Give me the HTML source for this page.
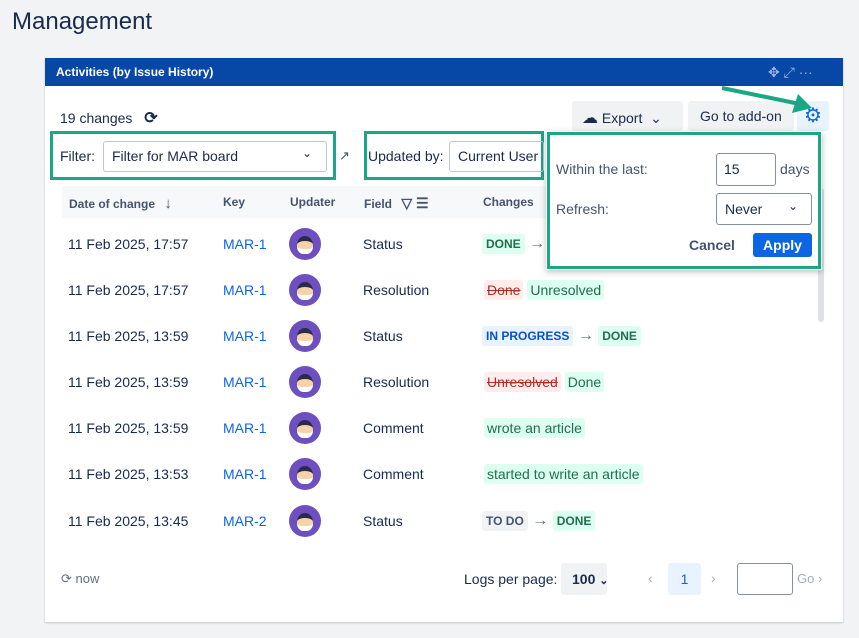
<!DOCTYPE html><html><head><meta charset="utf-8"><style>
*{margin:0;padding:0;box-sizing:border-box}
body{width:859px;height:638px;background:#f2f3f5;font-family:"Liberation Sans",sans-serif;position:relative;overflow:hidden;color:#172b4d}
.a{position:absolute}
.t{font-size:14px;color:#172b4d}
.lnk{color:#0c66e4;font-size:14px}
.lz{display:inline-block;padding:3px 4px;border-radius:3px;font-size:12px;font-weight:bold}
.av{width:32px;height:32px;border-radius:50%;background:#6e4fbf;overflow:hidden}
.btn{background:#f1f2f4;border-radius:3px}
.box{border:3px solid #1aa784}
.ch{font-size:14px}
.ch span{padding:2px 3px;border-radius:3px}
</style></head><body>
<div class="a" style="left:12px;top:8px;font-size:24px;color:#172b4d">Management</div>
<div class="a" style="left:45px;top:58px;width:798px;height:564px;background:#fff;box-shadow:0 1px 2px rgba(0,0,0,.2)"></div>
<div class="a" style="left:45px;top:58px;width:798px;height:28px;background:#0747a6"></div>
<div class="a" style="left:56px;top:65px;font-size:12px;font-weight:bold;color:#fff">Activities (by Issue History)</div>
<div class="a" style="left:768px;top:64px;color:#9fb4de;font-size:14px">✥ ⤢ ···</div>
<div class="a t" style="left:60px;top:108px">19 changes <span style="font-weight:bold;margin-left:8px;font-size:16px">⟳</span></div>
<div class="a btn" style="left:572px;top:101px;width:111px;height:30px"></div>
<div class="a t" style="left:582px;top:108px"><span style="font-size:16px">☁</span> Export &nbsp;⌄</div>
<div class="a btn" style="left:688px;top:101px;width:106px;height:30px"></div>
<div class="a t" style="left:700px;top:108px">Go to add-on</div>
<div class="a" style="left:797px;top:101px;width:32px;height:30px;background:#e9f2ff;border-radius:3px;color:#0c66e4;font-size:20px;text-align:center;line-height:30px">⚙</div>
<svg class="a" style="left:720px;top:80px" width="100" height="40"><line x1="2" y1="8" x2="80" y2="24" stroke="#1aa784" stroke-width="4"/><polygon points="92,28 72,33 78,14" fill="#1aa784"/></svg>
<div class="a box" style="left:50px;top:131px;width:286px;height:49px"></div>
<div class="a t" style="left:60px;top:148px">Filter:</div>
<div class="a" style="left:103px;top:141px;width:224px;height:31px;border:1px solid #c1c7d0;border-radius:3px"></div>
<div class="a t" style="left:112px;top:148px">Filter for MAR board</div>
<div class="a" style="left:302px;top:146px;font-size:12px">⌄</div>
<div class="a" style="left:339px;top:148px;font-size:13px;color:#44546f">↗</div>
<div class="a box" style="left:364px;top:131px;width:180px;height:49px"></div>
<div class="a t" style="left:368px;top:148px">Updated by:</div>
<div class="a" style="left:449px;top:141px;width:95px;height:31px;border:1px solid #c1c7d0;border-radius:3px"></div>
<div class="a t" style="left:458px;top:148px">Current User</div>
<div class="a" style="left:62px;top:186px;width:756px;height:32px;background:#f7f8f9"></div>
<div class="a" style="left:69px;top:195px;font-size:12px;font-weight:bold;color:#44546f">Date of change <span style="font-size:15px;margin-left:6px">↓</span></div>
<div class="a" style="left:223px;top:195px;font-size:12px;font-weight:bold;color:#44546f">Key</div>
<div class="a" style="left:290px;top:195px;font-size:12px;font-weight:bold;color:#44546f">Updater</div>
<div class="a" style="left:364px;top:195px;font-size:12px;font-weight:bold;color:#44546f">Field <span style="font-size:14px;margin-left:6px">▽ ☰</span></div>
<div class="a" style="left:483px;top:195px;font-size:12px;font-weight:bold;color:#44546f">Changes</div>
<div class="a" style="left:818px;top:188px;width:6px;height:134px;background:#dfe1e6;border-radius:3px"></div>

<div class="a t" style="left:68px;top:236px">11 Feb 2025, 17:57</div><div class="a lnk" style="left:223px;top:236px">MAR-1</div><div class="a t" style="left:363px;top:236px">Status</div>
<div class="a t" style="left:68px;top:282px">11 Feb 2025, 17:57</div><div class="a lnk" style="left:223px;top:282px">MAR-1</div><div class="a t" style="left:363px;top:282px">Resolution</div>
<div class="a t" style="left:68px;top:328px">11 Feb 2025, 13:59</div><div class="a lnk" style="left:223px;top:328px">MAR-1</div><div class="a t" style="left:363px;top:328px">Status</div>
<div class="a t" style="left:68px;top:374px">11 Feb 2025, 13:59</div><div class="a lnk" style="left:223px;top:374px">MAR-1</div><div class="a t" style="left:363px;top:374px">Resolution</div>
<div class="a t" style="left:68px;top:420px">11 Feb 2025, 13:59</div><div class="a lnk" style="left:223px;top:420px">MAR-1</div><div class="a t" style="left:363px;top:420px">Comment</div>
<div class="a t" style="left:68px;top:466px">11 Feb 2025, 13:53</div><div class="a lnk" style="left:223px;top:466px">MAR-1</div><div class="a t" style="left:363px;top:466px">Comment</div>
<div class="a t" style="left:68px;top:513px">11 Feb 2025, 13:45</div><div class="a lnk" style="left:223px;top:513px">MAR-2</div><div class="a t" style="left:363px;top:513px">Status</div>

<div class="a av" style="left:289px;top:228px"><div style="margin:8px auto 0;width:16px;height:18px;background:#f6d2a8;border-radius:50% 50% 40% 40%;border-top:5px solid #2c2a4a;border-bottom:5px solid #fff"></div></div>
<div class="a av" style="left:289px;top:274px"><div style="margin:8px auto 0;width:16px;height:18px;background:#f6d2a8;border-radius:50% 50% 40% 40%;border-top:5px solid #2c2a4a;border-bottom:5px solid #fff"></div></div>
<div class="a av" style="left:289px;top:320px"><div style="margin:8px auto 0;width:16px;height:18px;background:#f6d2a8;border-radius:50% 50% 40% 40%;border-top:5px solid #2c2a4a;border-bottom:5px solid #fff"></div></div>
<div class="a av" style="left:289px;top:366px"><div style="margin:8px auto 0;width:16px;height:18px;background:#f6d2a8;border-radius:50% 50% 40% 40%;border-top:5px solid #2c2a4a;border-bottom:5px solid #fff"></div></div>
<div class="a av" style="left:289px;top:412px"><div style="margin:8px auto 0;width:16px;height:18px;background:#f6d2a8;border-radius:50% 50% 40% 40%;border-top:5px solid #2c2a4a;border-bottom:5px solid #fff"></div></div>
<div class="a av" style="left:289px;top:458px"><div style="margin:8px auto 0;width:16px;height:18px;background:#f6d2a8;border-radius:50% 50% 40% 40%;border-top:5px solid #2c2a4a;border-bottom:5px solid #fff"></div></div>
<div class="a av" style="left:289px;top:505px"><div style="margin:8px auto 0;width:16px;height:18px;background:#f6d2a8;border-radius:50% 50% 40% 40%;border-top:5px solid #2c2a4a;border-bottom:5px solid #fff"></div></div>

<div class="a" style="left:482px;top:234px"><span class="lz" style="background:#dcfff1;color:#216e4e">DONE</span> <span style="color:#626f86">→</span></div>
<div class="a ch" style="left:484px;top:282px"><span style="background:#ffeceb;color:#ae2e24;text-decoration:line-through">Done</span> <span style="background:#dcfff1;color:#216e4e">Unresolved</span></div>
<div class="a" style="left:482px;top:326px"><span class="lz" style="background:#e9f2ff;color:#0055cc">IN PROGRESS</span> <span style="color:#626f86">→</span> <span class="lz" style="background:#dcfff1;color:#216e4e">DONE</span></div>
<div class="a ch" style="left:484px;top:374px"><span style="background:#ffeceb;color:#ae2e24;text-decoration:line-through">Unresolved</span> <span style="background:#dcfff1;color:#216e4e">Done</span></div>
<div class="a ch" style="left:484px;top:420px"><span style="background:#dcfff1;color:#216e4e">wrote an article</span></div>
<div class="a ch" style="left:484px;top:466px"><span style="background:#dcfff1;color:#216e4e">started to write an article</span></div>
<div class="a" style="left:482px;top:511px"><span class="lz" style="background:#f1f2f4;color:#44546f">TO DO</span> <span style="color:#626f86">→</span> <span class="lz" style="background:#dcfff1;color:#216e4e">DONE</span></div>

<div class="a" style="left:546px;top:131px;width:276px;height:139px;background:#fff;box-shadow:0 2px 6px rgba(0,0,0,.25)"></div>
<div class="a box" style="left:547px;top:132px;width:274px;height:137px"></div>
<div class="a t" style="left:556px;top:161px;color:#44546f">Within the last:</div>
<div class="a" style="left:716px;top:153px;width:60px;height:33px;border:1px solid #8590a2;border-radius:3px"></div>
<div class="a t" style="left:724px;top:161px">15</div>
<div class="a t" style="left:780px;top:161px;color:#44546f">days</div>
<div class="a t" style="left:556px;top:201px;color:#44546f">Refresh:</div>
<div class="a" style="left:716px;top:193px;width:96px;height:32px;border:1px solid #8590a2;border-radius:3px"></div>
<div class="a t" style="left:725px;top:201px">Never</div>
<div class="a" style="left:788px;top:199px;font-size:12px">⌄</div>
<div class="a t" style="left:689px;top:237px;font-weight:bold;color:#44546f">Cancel</div>
<div class="a" style="left:753px;top:233px;width:59px;height:24px;background:#0c66e4;border-radius:3px;color:#fff;font-weight:bold;font-size:14px;text-align:center;line-height:24px">Apply</div>

<div class="a" style="left:61px;top:571px;font-size:13px;color:#626f86">⟳ now</div>
<div class="a t" style="left:464px;top:571px">Logs per page:</div>
<div class="a btn" style="left:561px;top:563px;width:46px;height:32px"></div>
<div class="a t" style="left:572px;top:571px;font-weight:bold">100 <span style="font-size:11px">⌄</span></div>
<div class="a" style="left:648px;top:570px;color:#a5adba;font-size:14px">‹</div>
<div class="a" style="left:668px;top:563px;width:33px;height:32px;background:#e9f2ff;border-radius:3px;color:#0c66e4;font-size:14px;text-align:center;line-height:32px">1</div>
<div class="a" style="left:711px;top:570px;color:#a5adba;font-size:14px">›</div>
<div class="a" style="left:737px;top:563px;width:56px;height:32px;border:1px solid #8590a2;border-radius:3px"></div>
<div class="a" style="left:797px;top:571px;color:#a5adba;font-size:13px">Go ›</div>
</body></html>
